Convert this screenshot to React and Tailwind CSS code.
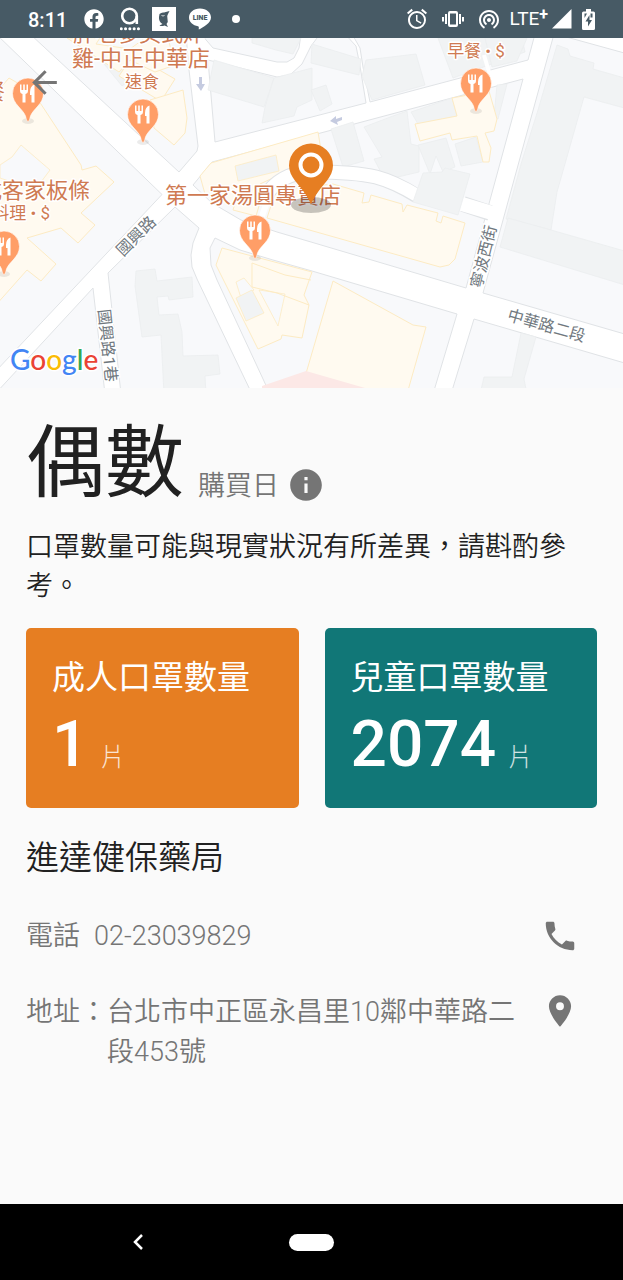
import React from "react";
import {
  MdAlarm,
  MdArrowBack,
  MdInfo,
  MdPhone,
  MdPlace,
  MdWifiTethering,
} from "react-icons/md";
import { FaFacebook } from "react-icons/fa";

const blocks = [
  "-5,33 162,194.5 -5,372",
  "30,34 179,172 197,151 198,146 189,70 186,34",
  "208,60 277,77 290,75 302,64 311,46 320,34 345,34 356,46 360,66 366,103 215,142",
  "201,34 213,48 277,62 287,62 294,58 299,48 301,34",
  "352,34 360,48 363,67 370,102 528,60 535,34",
  "212,162 523,79 466,288 311,242 277,232 241,220 212,203 193,185",
  "554,34 570,38 628,54 628,335 483,293",
  "474,319 628,364 628,394 451,394",
  "457,314 433,394 270,394 217,280 211,265 210,248 215,238 240,250 273,260 312,271",
  "175,207 199,228 193,243 191,255 192,267 197,279 252,394 121,394 108,273",
  "93,288 -5,394 105,394",
];

const grey = [
  "214,60 274,78 264,107 208,90",
  "274,78 312,68 312,100 297,107 294,116 262,123 265,107",
  "252,38 301,38 293,54 276,50 252,43",
  "312,44 361,59 359,75 311,63",
  "366,60 416,54 425,85 372,100 362,76",
  "438,38 522,38 525,52 453,78",
  "485,38 527,38 517,61 492,67",
  "311,90 326,85 332,104 320,111",
  "331,129 353,122 364,161 343,167",
  "364,127 393,116 407,111 411,144 419,146 419,172 385,180 374,159 382,157",
  "411,112 452,98 457,116 418,124",
  "418,145 446,138 455,167 443,172 436,156 430,174",
  "455,144 476,137 483,162 461,166",
  "497,85 507,84 498,119 494,117",
  "557,45 568,49 570,56 594,63 593,69 628,79 628,109 584,97 557,192 551,230 506,219 521,164 538,110",
  "508,218 551,230 628,252 628,286 500,247",
  "521,333 536,337 524,379 527,394 480,394 484,377 512,377",
  "136,271 155,269 157,281 192,277 193,297 169,300 168,296 157,297 159,315 178,314 182,332 183,356 218,355 220,374 205,376 206,394 164,394 161,335 142,337 135,286",
  "83,38 128,60 136,75 122,86",
];

const yellow = [
  "-5,94 9,78 33,92 81,165 82,170 96,166 114,182 81,213 95,225 78,243 61,228 27,238 56,264 41,281 27,270 -5,306",
  "119,76 133,55 175,79 163,98 157,99",
  "150,100 183,90 187,118 185,133 174,145 154,128",
  "67,38 100,38 96,44 130,49 145,38 168,38 175,65 155,72 130,60 119,72",
  "200,176 211,163 318,132 321,150 307,162 260,184 257,192 240,209 205,194",
  "452,98 489,91 497,119 494,131 485,133 491,148 489,162 483,162 477,136 452,140 450,133 420,141 415,124 457,116",
  "333,184 364,193 362,203 369,202 371,195 402,204 403,212 407,205 438,213 436,221 441,223 443,216 465,223 455,259 449,265 440,267 267,218 276,190",
  "233,210 256,216 262,196 239,190",
  "222,248 312,272 304,295 309,305 302,338 282,335 281,339 258,349 216,265",
  "333,281 413,325 426,327 407,394 300,394",
];

function FoodPin({ x, y }) {
  return (
    <g transform={`translate(${x} ${y})`}>
      <ellipse cx="0" cy="43" rx="6" ry="3" fill="#000" opacity="0.08" />
      <path
        d="M0 43.500C-1.500 43.500-1.600 41-2.500 38C-5 31-15.500 26-15.500 15.500A15.500 15.500 0 0 1 15.500 15.500C15.500 26 5 31 2.500 38C1.600 41 1.500 43.500 0 43.500Z"
        fill="#ff9e67"
        stroke="#fff"
        strokeWidth="0.6"
      />
      <path
        d="M-8 6.500V12.500Q-8 15.500-5.500 16V24.500H-2.500V16Q0 15.500 0 12.500V6.500H-1.500V12H-3.200V6.500H-4.800V12H-6.500V6.500ZM6.500 6.500Q2 8 2 14V17H3.500V24.500H6.500Z"
        fill="#fff"
      />
    </g>
  );
}

const poi =
  "fill-[#cf7a52] stroke-white stroke-[3px] [paint-order:stroke] [stroke-linejoin:round]";
const street =
  "fill-[#70787e] stroke-white stroke-[3px] [paint-order:stroke] text-[16px]";

function MapView() {
  return (
    <svg
      viewBox="0 38 623 350"
      preserveAspectRatio="xMidYMid slice"
      className="block w-full h-[350px]"
      role="img"
      aria-label="地圖"
    >
      <rect x="-5" y="30" width="640" height="370" fill="#fff" />
      <g fill="#f8f9fb" stroke="#e0e3e6" strokeWidth="1">
        {blocks.map((p) => (
          <polygon key={p} points={p} />
        ))}
      </g>
      <g fill="#f1f3f4" stroke="#ebedef" strokeWidth="0.8">
        {grey.map((p) => (
          <polygon key={p} points={p} />
        ))}
      </g>
      <g fill="#fffaf0" stroke="#fdebc3" strokeWidth="1">
        {yellow.map((p) => (
          <polygon key={p} points={p} />
        ))}
      </g>
      <g fill="#f8f9fb" stroke="#fdebc3" strokeWidth="0.8">
        <polygon points="21,145 50,170 35,190 0,178 0,165 12,157" />
        <polygon points="259,290 285,294 278,326 268,307" />
        <polygon points="236,282 244,278 254,290 241,298" />
      </g>
      <path d="M236 298L252 290L264 313L246 321Z M235 166L276 155L279 171L238 181Z" fill="#f1f3f4" stroke="#fdebc3" strokeWidth="0.8" />
      <path d="M252 263L285 275L311 280M252 263V287L277 293L309 305" fill="none" stroke="#fdebc3" />
      <path d="M262 216L268 199" stroke="#fff" strokeWidth="6" />
      <path d="M264 198Q280 172 312 172Q355 172 376 177Q395 182 417 196" fill="none" stroke="#e0e3e6" strokeWidth="15" />
      <path d="M264 198Q280 172 312 172Q355 172 376 177Q395 182 418 196" fill="none" stroke="#fff" strokeWidth="13" />
      <path d="M463 204L490 213" stroke="#e0e3e6" strokeWidth="16" />
      <path d="M462 204L492 213" stroke="#fff" strokeWidth="14" />
      <path d="M413 202L423 173L442 172L445 168L470 174L458 215Z" fill="#f1f3f4" stroke="#ebedef" strokeWidth="0.8" />
      <path d="M484 55L489 72" stroke="#fff" strokeWidth="4" />
      <path d="M262 386L306 371L372 390V394H262Z" fill="#fce8e6" />
      <path d="M199 77L202 77L202 84L205 84L201 91L196 84L199 84Z M330 121L336 116L336 119L342 117V120L337 122L338 125Z" fill="#c5cbe0" />

      <g className="font-['Roboto','Noto_Sans_CJK_TC',sans-serif]">
        <g className={street} textAnchor="middle">
          <text transform="translate(140 240) rotate(-45)">國興路</text>
          <text transform="translate(102 346) rotate(84)">國興路1巷</text>
          <text transform="translate(489 258) rotate(-76)">寧波西街</text>
          <text transform="translate(545 331) rotate(16)">中華路二段</text>
        </g>
        <g className={`${poi} text-[22px]`}>
          <text x="139" y="41" textAnchor="middle">胖老爹美式炸</text>
          <text x="141" y="66" textAnchor="middle">雞-中正中華店</text>
          <text x="90" y="198" textAnchor="end">式客家板條</text>
          <text x="253" y="203" textAnchor="middle">第一家湯圓專賣店</text>
          <text x="5" y="99" textAnchor="end">餐</text>
        </g>
        <g className={`${poi} text-[17px]`}>
          <text x="142" y="88" textAnchor="middle">速食</text>
          <text x="50" y="219" textAnchor="end">料理 • $</text>
          <text x="476" y="57" textAnchor="middle">早餐 • $</text>
        </g>
        <FoodPin x={28} y={78} />
        <FoodPin x={143} y={99} />
        <FoodPin x={476} y={68} />
        <FoodPin x={255} y={215} />
        <FoodPin x={4} y={231} />
      </g>

      <ellipse cx="311" cy="205" rx="20" ry="8" fill="#000" opacity="0.22" />
      <path
        d="M311 143.500A22 22 0 0 0 289 165.500C289 177 299 184 306 195Q309 200 311 204Q313 200 316 195C323 184 333 177 333 165.500A22 22 0 0 0 311 143.500Z"
        fill="#e67e22"
      />
      <circle cx="311" cy="165" r="10.500" fill="none" stroke="#fff" strokeWidth="4" />

      <text
        x="10"
        y="370"
        className="font-['Lato',sans-serif] text-[28px] font-medium stroke-white stroke-[3px] [paint-order:stroke]"
      >
        <tspan fill="#4285f4">G</tspan>
        <tspan fill="#ea4335">o</tspan>
        <tspan fill="#fbbc05">o</tspan>
        <tspan fill="#4285f4">g</tspan>
        <tspan fill="#34a853">l</tspan>
        <tspan fill="#ea4335">e</tspan>
      </text>
    </svg>
  );
}

function StatusBar() {
  return (
    <header className="flex h-[38px] items-center justify-between bg-[#475a65] px-7 text-white">
      <div className="flex items-center">
        <time className="w-14 pt-0.5 text-[20px] leading-6 font-medium">8:11</time>
        <FaFacebook className="size-5" />
        <svg viewBox="0 0 20 24" className="ml-4 h-6 w-5">
          <circle cx="9.500" cy="9" r="7.300" fill="none" stroke="#fff" strokeWidth="2.600" />
          <path d="M16.800 9V17" stroke="#fff" strokeWidth="2.600" />
          <path d="M1.200 21.800H19" stroke="#fff" strokeWidth="3" strokeLinecap="round" strokeDasharray="0.100 4.200" />
        </svg>
        <svg viewBox="0 0 24 24" className="ml-3 size-6">
          <rect width="24" height="24" fill="#fff" />
          <path
            d="M7.500 7Q9.500 5 12 5.500L17.500 4L16 7Q14.500 9 15.500 12Q16.500 15 14.500 17L16 20L12.500 18.500Q9.500 19.500 7.500 18.500L10.500 17Q6.500 14.500 7 10Z"
            fill="#475a65"
          />
          <path d="M9.500 8.500Q11 9.500 12.500 8.500" stroke="#fff" strokeWidth="0.800" fill="none" />
        </svg>
        <svg viewBox="0 0 24 24" className="ml-3 size-6">
          <path
            d="M12 1.500C5.500 1.500 1 5.500 1 10.500C1 15 5 18.500 10 19.200C11.500 19.500 10.500 21 10.800 22.500C15 20.500 23 16 23 10.500C23 5.500 18.500 1.500 12 1.500Z"
            fill="#fff"
          />
          <text x="12" y="12.500" textAnchor="middle" fill="#475a65" className="font-['Roboto',sans-serif] text-[7px] font-black">
            LINE
          </text>
        </svg>
        <span className="ml-5 size-2 rounded-full bg-white" />
      </div>
      <div className="flex items-center">
        <MdAlarm className="size-6" />
        <svg viewBox="0 0 24 24" className="ml-3 size-6" fill="#fff">
          <path
            fillRule="evenodd"
            d="M9 4H15Q17 4 17 6V18Q17 20 15 20H9Q7 20 7 18V6Q7 4 9 4ZM9 6.500V17.500H15V6.500ZM4 7H6V17H4ZM18 7H20V17H18ZM1 10H3V14.500H1ZM21 10H23V14.500H21Z"
          />
        </svg>
        <MdWifiTethering className="ml-3 size-6" />
        <span className="ml-2 flex text-[19px] leading-6">
          LTE<span className="text-[16px] leading-4 font-bold">+</span>
        </span>
        <svg viewBox="0 0 20 20" className="ml-1 size-5">
          <path d="M19.500 0V19.500H0Z" fill="#fff" />
        </svg>
        <svg viewBox="0 0 13 21" className="ml-2.5 h-[21px] w-[13px]">
          <path d="M4 0H9V2.500H11.500Q13 2.500 13 4V19.500Q13 21 11.500 21H1.500Q0 21 0 19.500V4Q0 2.500 1.500 2.500H4Z" fill="#fff" />
          <path d="M2.500 4.500H5L2.500 9ZM8.500 4.500H10.500V8.500H8.500ZM7.500 6L3.500 12.500H6V17.500L10 11H7.500Z" fill="#475a65" />
        </svg>
      </div>
    </header>
  );
}

function CountCard({ label, count, color }) {
  return (
    <section className={`h-[180px] rounded-[5px] px-[26px] pt-[25px] text-white ${color}`}>
      <h2 className="text-[33px] leading-[50px]">{label}</h2>
      <p className="flex items-baseline gap-3">
        <span className="text-[64px] leading-[84px] font-medium">{count}</span>
        <span className="text-[25px] font-light text-white/80">片</span>
      </p>
    </section>
  );
}

export default function App() {
  return (
    <div className="flex min-h-screen flex-col bg-[#fafafa] font-['Roboto','Noto_Sans_CJK_TC',sans-serif] text-[#212121]">
      <StatusBar />
      <div className="relative">
        <MapView />
        <button type="button" aria-label="返回" className="absolute left-[26px] top-[26px] text-[#757575]">
          <MdArrowBack className="size-[37px]" />
        </button>
      </div>
      <main className="flex-1 px-[26px] pt-5">
        <div className="flex items-end">
          <h1 className="text-[79px] leading-[112px]">偶數</h1>
          <span className="ml-3.5 pb-[14px] text-[27px] leading-10 font-[350] text-[#757575]">購買日</span>
          <button type="button" aria-label="說明" className="ml-2 pb-4 text-[#757575]">
            <MdInfo className="size-[38px]" />
          </button>
        </div>
        <p className="mt-2 text-[27px] leading-[39px] font-[350]">
          口罩數量可能與現實狀況有所差異，請斟酌參考。
        </p>
        <div className="mt-[22px] grid grid-cols-2 gap-[26px]">
          <CountCard label="成人口罩數量" count="1" color="bg-[#e67e22]" />
          <CountCard label="兒童口罩數量" count="2074" color="bg-[#117777]" />
        </div>
        <h2 className="mt-[25px] text-[33px] leading-[50px] font-[350]">進達健保藥局</h2>
        <div className="mt-[33px] flex items-center text-[27px] leading-10 font-[350] text-[#757575]">
          <span>電話</span>
          <span className="ml-3.5 flex-1">02-23039829</span>
          <button type="button" aria-label="撥打電話" className="mr-[18px]">
            <MdPhone className="size-[38px]" />
          </button>
        </div>
        <div className="mt-9 flex items-start text-[27px] leading-10 font-[350] text-[#757575]">
          <span className="shrink-0">地址：</span>
          <address className="flex-1 not-italic">台北市中正區永昌里10鄰中華路二段453號</address>
          <button type="button" aria-label="開啟地圖" className="ml-6 mr-[18px]">
            <MdPlace className="size-[38px]" />
          </button>
        </div>
      </main>
      <nav className="grid h-[76px] grid-cols-9 items-center bg-black text-white">
        <button type="button" aria-label="上一頁" className="col-start-2 col-span-2 flex justify-center">
          <svg viewBox="0 0 12 18" className="h-[18px] w-3">
            <path d="M10 2L3 9L10 16" fill="none" stroke="#fff" strokeWidth="2.500" />
          </svg>
        </button>
        <button type="button" aria-label="首頁" className="col-start-5 mx-auto h-[17px] w-[45px] rounded-full bg-white" />
      </nav>
    </div>
  );
}
